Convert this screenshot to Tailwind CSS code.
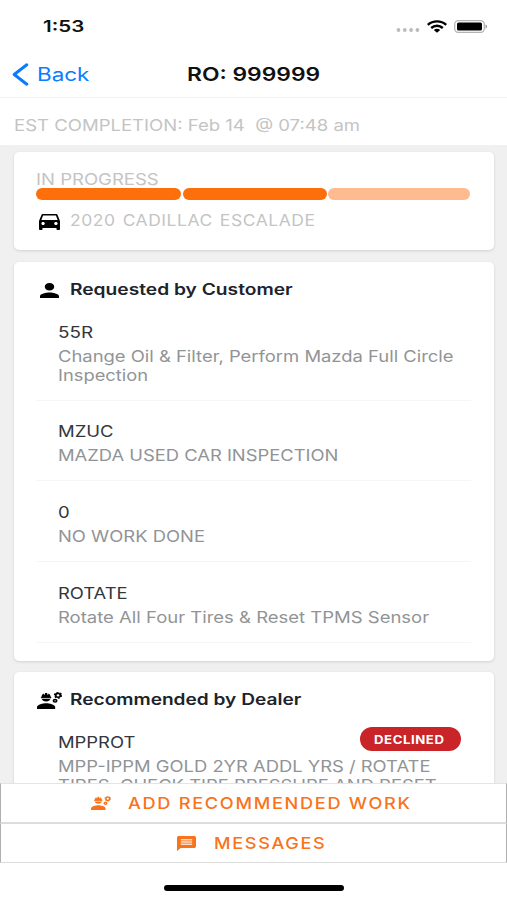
<!DOCTYPE html>
<html lang="en">
<head>
<meta charset="utf-8">
<meta name="viewport" content="width=device-width, initial-scale=1">
<title>RO: 999999</title>
<script src="https://cdn.jsdelivr.net/npm/@tailwindcss/browser@4"></script>
</head>
<body class="bg-white font-['Inter','Liberation_Sans',sans-serif] text-[16px] leading-[19px]">
<svg class="hidden">
  <symbol id="engineer" viewBox="1 3 22 18" preserveAspectRatio="none">
    <path d="M9 15c-2.67 0-8 1.34-8 4v2h16v-2c0-2.660-5.330-4-8-4z"/>
    <path d="M4.740 9H5c0 2.210 1.790 4 4 4s4-1.790 4-4h.26c.27 0 .49-.22.49-.49v-.02c0-.27-.22-.49-.49-.49H13c0-1.480-.81-2.750-2-3.450v.95a.5.5 0 0 1-1 0V4.140C9.680 4.060 9.350 4 9 4s-.68.06-1 .14V5.500a.5.5 0 0 1-1 0v-.95C5.810 5.250 5 6.520 5 8h-.26c-.27 0-.49.22-.49.490v.03c0 .26.22.48.49.48z"/>
    <path fill="#fff" d="M5.300 9.300h7.400v.8H5.300z"/>
    <circle cx="19.500" cy="6.500" r="2.100" fill="none" stroke="currentColor" stroke-width="1.700"/>
    <circle cx="19.500" cy="6.500" r="3.200" fill="none" stroke="currentColor" stroke-width="1" stroke-dasharray="1.675"/>
    <circle cx="16.900" cy="12.300" r="1.400" fill="none" stroke="currentColor" stroke-width="1.600"/>
  </symbol>
</svg>
<div class="flex h-[900px] w-[507px] flex-col overflow-hidden">
  <div class="flex h-[50px] shrink-0 items-center pt-[3px] pr-[19px] pl-[43px]">
    <span class="block w-max origin-left scale-x-[1.284] font-semibold text-[#111]">1:53</span>
    <div class="ml-auto flex items-center">
      <svg class="mt-[7px] mr-[7px] h-[4px] w-[24px]" viewBox="0 0 24 4" fill="#bbb"><circle cx="2.500" cy="2" r="1.900"/><circle cx="8.800" cy="2" r="1.900"/><circle cx="15.100" cy="2" r="1.900"/><circle cx="21.400" cy="2" r="1.900"/></svg>
      <svg class="mr-[7px] h-[13px] w-[20px]" viewBox="0 0 20 13" fill="none" stroke="#000" stroke-width="2.400"><path d="M.8 4.800C6 .2 14 .2 19.200 4.800M4.200 8C7.600 5 12.400 5 15.800 8"/><path fill="#000" stroke="none" d="M6.800 9.900c2-1.500 4.400-1.500 6.400 0L10 12.800z"/></svg>
      <svg class="h-[13px] w-[34px]" viewBox="0 0 34 13"><rect x=".7" y=".7" width="29.600" height="11.600" rx="3.500" fill="#fff" stroke="#b4b4b4" stroke-width="1.300"/><rect x="3" y="2.500" width="25" height="8" rx="1.500"/><path d="M31.500 4.500c2 .5 2 3.500 0 4z" fill="#999"/></svg>
    </div>
  </div>
  <div class="flex h-[48px] shrink-0 items-center border-b border-[#f1f1f1] pt-[1px] pl-[12px]">
    <svg class="h-[23px] w-[17px]" viewBox="0 0 17 23" fill="none" stroke="#0a7cff" stroke-width="3" stroke-linecap="round" stroke-linejoin="round"><path d="M14.800 1.800 2.200 11.500l12.600 9.700"/></svg>
    <span class="ml-[8px] block w-[51px] origin-left scale-x-[1.245] text-[18px] text-[#0a7cff]">Back</span>
    <span class="ml-[99px] block w-max origin-left scale-x-[1.235] text-[18.500px] font-semibold text-[#111]">RO: 999999</span>
  </div>
  <div class="flex h-[47px] shrink-0 items-center pt-[8px] pl-[14px] text-[#c4c4c4]">
    <span class="block w-max origin-left scale-x-[1.158] whitespace-pre">EST COMPLETION: Feb 14  @ 07:48 am</span>
  </div>
  <main class="min-h-0 flex-1 overflow-hidden bg-[#f0f0f0] px-[14px] pt-[7px]">
    <section class="mr-[-0.500px] h-[98px] rounded-[5px] bg-white px-[22px] pt-[18px] shadow-[0_1px_3px_rgba(0,0,0,0.13)]">
      <span class="block h-[18px] w-max origin-left scale-x-[1.158] text-[#c4c4c4]">IN PROGRESS</span>
      <div class="flex h-[12px] gap-[1.500px]">
        <div class="w-[145px] rounded-full bg-[#fd6f0b]"></div>
        <div class="w-[144px] rounded-full bg-[#fd6f0b]"></div>
        <div class="w-[142px] rounded-full bg-[#fdbb8f]"></div>
      </div>
      <div class="mt-[5px] flex h-[30px] items-center">
        <svg class="mt-[4px] ml-[3px] h-[16px] w-[21px]" viewBox="3 5 18 16" preserveAspectRatio="none"><path d="M18.920 6.010C18.720 5.420 18.160 5 17.500 5h-11c-.66 0-1.210.42-1.420 1.010L3 12v8c0 .55.45 1 1 1h1c.55 0 1-.45 1-1v-1h12v1c0 .55.45 1 1 1h1c.55 0 1-.45 1-1v-8zM6.500 16c-.83 0-1.500-.67-1.500-1.500S5.670 13 6.500 13s1.500.67 1.500 1.500S7.330 16 6.500 16zm11 0c-.83 0-1.500-.67-1.500-1.500s.67-1.500 1.500-1.500 1.500.67 1.500 1.500-.67 1.500-1.500 1.500zM5 11l1.500-4.500h11L19 11z"/></svg>
        <span class="ml-[10px] block w-max origin-left scale-x-[1.092] tracking-[0.500px] text-[#c4c4c4] [word-spacing:1.500px]">2020 CADILLAC ESCALADE</span>
      </div>
    </section>
    <section class="mt-[12px] mr-[-0.500px] h-[399px] rounded-[5px] bg-white px-[22px] pt-[17px] shadow-[0_1px_3px_rgba(0,0,0,0.13)]">
      <div class="flex h-[20px] items-center">
        <svg class="mt-[3px] ml-[4px] h-[15px] w-[19px]" viewBox="4 4 16 16" preserveAspectRatio="none"><path d="M12 12c2.210 0 4-1.790 4-4s-1.790-4-4-4-4 1.790-4 4 1.790 4 4 4zm0 2c-2.670 0-8 1.340-8 4v2h16v-2c0-2.660-5.330-4-8-4z"/></svg>
        <span class="ml-[11px] block w-max origin-left scale-x-[1.238] text-[15.500px] font-semibold text-[#1d232b]">Requested by Customer</span>
      </div>
      <div class="mr-[1px] h-[102px] border-b border-[#f5f5f5] pt-[23px] pl-[22px]">
        <span class="block w-max origin-left scale-x-[1.180] leading-[20px] text-[#33373c]">55R</span>
        <span class="mt-[5px] block w-max origin-left scale-x-[1.151] text-[#919496]">Change Oil &amp; Filter, Perform Mazda Full Circle</span>
        <span class="block w-max origin-left scale-x-[1.145] text-[#919496]">Inspection</span>
      </div>
      <div class="mr-[1px] h-[80px] border-b border-[#f5f5f5] pt-[20px] pl-[22px]">
        <span class="block w-max origin-left scale-x-[1.155] leading-[20px] text-[#33373c]">MZUC</span>
        <span class="mt-[5px] block w-max origin-left scale-x-[1.148] text-[#919496]">MAZDA USED CAR INSPECTION</span>
      </div>
      <div class="mr-[1px] h-[81px] border-b border-[#f5f5f5] pt-[20.500px] pl-[22px]">
        <span class="block w-max origin-left scale-x-[1.155] leading-[20px] text-[#33373c]">0</span>
        <span class="mt-[5px] block w-max origin-left scale-x-[1.150] text-[#919496]">NO WORK DONE</span>
      </div>
      <div class="mr-[1px] h-[81px] border-b border-[#f5f5f5] pt-[20.500px] pl-[22px]">
        <span class="block w-max origin-left scale-x-[1.148] leading-[20px] text-[#33373c]">ROTATE</span>
        <span class="mt-[5px] block w-max origin-left scale-x-[1.155] text-[#919496]">Rotate All Four Tires &amp; Reset TPMS Sensor</span>
      </div>
    </section>
    <section class="mt-[11px] mr-[-0.500px] h-[399px] rounded-[5px] bg-white px-[22px] pt-[17px] shadow-[0_1px_3px_rgba(0,0,0,0.13)]">
      <div class="flex h-[20px] items-center">
        <svg class="mt-[3px] ml-[1px] h-[17px] w-[25px] text-black" fill="currentColor"><use href="#engineer"/></svg>
        <span class="ml-[8px] block w-max origin-left scale-x-[1.232] text-[15.500px] font-semibold text-[#1d232b]">Recommended by Dealer</span>
      </div>
      <div class="pt-[18px] pl-[22px]">
        <div class="flex h-[24px]">
          <span class="mt-[5px] block w-max origin-left scale-x-[1.150] leading-[20px] text-[#33373c]">MPPROT</span>
          <div class="mr-[10.500px] ml-auto h-[24px] w-[101px] rounded-full bg-[#c92427] pt-[1px] pl-[14px] leading-[24px]">
            <span class="block w-max origin-left scale-x-[1.145] text-[11.500px] font-bold tracking-[0.500px] text-white">DECLINED</span>
          </div>
        </div>
        <span class="mt-[6px] block w-max origin-left scale-x-[1.148] text-[#919496]">MPP-IPPM GOLD 2YR ADDL YRS / ROTATE</span>
        <span class="block w-max origin-left scale-x-[1.150] text-[#919496]">TIRES, CHECK TIRE PRESSURE AND RESET</span>
      </div>
    </section>
  </main>
  <footer class="h-[117px] shrink-0 bg-white">
    <div class="flex h-[41px] items-center border-x border-t border-b-2 border-x-[#b0b0b0] border-t-[#e4e4e4] border-b-[#dcdcdc] pl-[90px] text-[#f8731c]">
      <svg class="h-[14px] w-[20px]" fill="currentColor"><use href="#engineer"/></svg>
      <span class="ml-[17px] block w-max origin-left scale-x-[1.134] font-medium tracking-[1.500px]">ADD RECOMMENDED WORK</span>
    </div>
    <div class="flex h-[39px] items-center border-x border-b border-x-[#b0b0b0] border-b-[#dcdcdc] pl-[176px] text-[#f8731c]">
      <svg class="h-[15px] w-[19px]" viewBox="2 2 20 20" preserveAspectRatio="none" fill="currentColor"><path d="M20 2H4c-1.100 0-1.990.9-1.990 2L2 22l4-4h14c1.100 0 2-.9 2-2V4c0-1.100-.9-2-2-2z"/><path fill="#fff" fill-opacity=".75" d="M6 6h12v2H6zM6 9h12v2H6zM6 12h12v2H6z"/></svg>
      <span class="ml-[18px] block w-max origin-left scale-x-[1.130] font-medium tracking-[1.500px]">MESSAGES</span>
    </div>
    <div class="mt-[22px] ml-[164px] h-[6px] w-[180px] rounded-full bg-black"></div>
  </footer>
</div>
</body>
</html>
